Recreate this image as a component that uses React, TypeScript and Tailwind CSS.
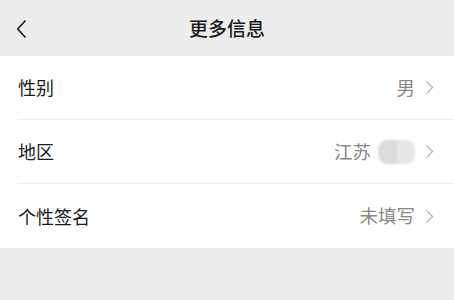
import React from "react";

function Chevron() {
  return (
    <svg width="9" height="15" viewBox="0 0 9 15" className="ml-[10px]">
      <path d="M1.5 1.5 L7.5 7.5 L1.5 13.5" fill="none" stroke="#b8b8b8" strokeWidth="1.4" />
    </svg>
  );
}

function Row({ label, value, last }: { label: string; value: React.ReactNode; last?: boolean }) {
  return (
    <div className="pl-[18px]">
      <div className={`flex h-[64px] items-center pr-[20px] ${last ? "" : "border-b border-[#f0f0f0]"}`}>
        <span className="text-[18px] text-[#1a1a1a]">{label}</span>
        <div className="ml-auto flex items-center text-[18.5px] text-[#888888]">
          {value}
          <Chevron />
        </div>
      </div>
    </div>
  );
}

export default function App() {
  return (
    <div
      className="h-[300px] w-[454px] bg-[#ededed]"
      style={{ fontFamily: '"Noto Sans CJK SC", "Noto Sans", sans-serif' }}
    >
      <div className="relative flex h-[56px] items-center justify-center">
        <svg width="13" height="20" viewBox="0 0 13 20" className="absolute left-[15px] top-[19px]">
          <path d="M10.5 1.5 L2.8 10 L10.5 18.5" fill="none" stroke="#222" strokeWidth="1.7" />
        </svg>
        <span className="text-[19px] font-medium text-[#1a1a1a]">更多信息</span>
      </div>
      <div className="bg-white">
        <Row label="性别" value="男" />
        <Row
          label="地区"
          value={
            <span className="flex items-center">
              江苏
              <span className="ml-[7px] flex h-[24px] w-[37px] overflow-hidden rounded-[9px] blur-[1px]">
                <span className="w-1/2 bg-[#dcdcdc]" />
                <span className="w-1/2 bg-[#e6e6e6]" />
              </span>
            </span>
          }
        />
        <Row label="个性签名" value="未填写" last />
      </div>
    </div>
  );
}
